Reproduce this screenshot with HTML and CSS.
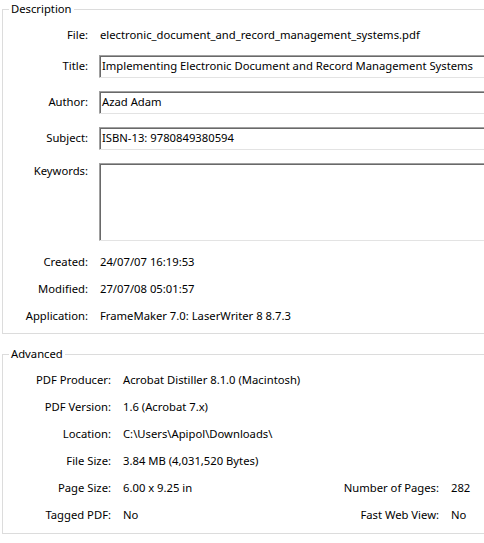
FILE: index.html
```html
<!DOCTYPE html>
<html lang="en">
<head>
<meta charset="utf-8">
<title>Document Properties</title>
<link rel="stylesheet" href="styles.css">
</head>
<body>
<div class="dialog">
  <fieldset class="group group-desc">
    <legend class="legend">Description</legend>
    <div class="rows">
      <div class="row">
        <div class="lbl">File:</div>
        <div class="val">electronic_document_and_record_management_systems.pdf</div>
      </div>
      <div class="row row-box">
        <div class="lbl lbl-box">Title:</div>
        <div class="box">Implementing Electronic Document and Record Management Systems</div>
      </div>
      <div class="row row-box">
        <div class="lbl lbl-box">Author:</div>
        <div class="box">Azad Adam</div>
      </div>
      <div class="row row-box">
        <div class="lbl lbl-box">Subject:</div>
        <div class="box">ISBN-13: 9780849380594</div>
      </div>
      <div class="row row-box">
        <div class="lbl">Keywords:</div>
        <div class="box box-tall"></div>
      </div>
      <div class="row row-after-box">
        <div class="lbl">Created:</div>
        <div class="val">24/07/07 16:19:53</div>
      </div>
      <div class="row row-text">
        <div class="lbl">Modified:</div>
        <div class="val">27/07/08 05:01:57</div>
      </div>
      <div class="row row-text">
        <div class="lbl">Application:</div>
        <div class="val">FrameMaker 7.0: LaserWriter 8 8.7.3</div>
      </div>
    </div>
  </fieldset>

  <fieldset class="group group-adv">
    <legend class="legend">Advanced</legend>
    <div class="adv">
      <div class="alb">PDF Producer:</div>
      <div class="aval span3">Acrobat Distiller 8.1.0 (Macintosh)</div>
      <div class="alb">PDF Version:</div>
      <div class="aval span3">1.6 (Acrobat 7.x)</div>
      <div class="alb">Location:</div>
      <div class="aval span3">C:\Users\Apipol\Downloads\</div>
      <div class="alb">File Size:</div>
      <div class="aval span3">3.84 MB (4,031,520 Bytes)</div>
      <div class="alb">Page Size:</div>
      <div class="aval">6.00 x 9.25 in</div>
      <div class="alb">Number of Pages:</div>
      <div class="aval">282</div>
      <div class="alb">Tagged PDF:</div>
      <div class="aval">No</div>
      <div class="alb">Fast Web View:</div>
      <div class="aval">No</div>
    </div>
  </fieldset>
</div>
</body>
</html>
```

FILE: styles.css
```css
html, body {
  margin: 0;
  padding: 0;
  background: #ffffff;
  overflow: hidden;
}

body {
  width: 484px;
  height: 543px;
  font-family: "Noto Sans", "Open Sans", "DejaVu Sans", sans-serif;
  font-size: 11.25px;
  line-height: 16px;
  color: #000000;
}

.dialog {
  width: 490px;
  padding: 1px 0 0 2px;
}

.group {
  margin: 0;
  padding: 0;
  width: 484px;
  border: 1px solid #dcdcdc;
  box-sizing: content-box;
  min-width: 0;
}

.legend {
  margin-left: 6px;
  padding: 0 2px;
  line-height: 16px;
}

.group-desc {
  padding: 10px 0 9px 0;
}

.group-adv {
  margin-top: 12px;
  padding: 10px 0 10px 0;
}

.rows {
  display: flex;
  flex-direction: column;
}

.row {
  display: flex;
  align-items: flex-start;
}

.row-box {
  margin-top: 12px;
}

.row-box + .row-box {
  margin-top: 13px;
}

.row-after-box {
  margin-top: 13px;
}

.row-text {
  margin-top: 11px;
}

.lbl {
  width: 85px;
  flex: none;
  text-align: right;
  margin-right: 11px;
}

.lbl-box {
  padding-top: 3px;
}

.val {
  padding-left: 1px;
  white-space: nowrap;
}

.box {
  flex: 1;
  height: 23px;
  box-sizing: border-box;
  padding: 2px 0 0 2px;
  background: #ffffff;
  border-top: 1px solid #a0a0a0;
  border-left: 1px solid #a0a0a0;
  border-right: 1px solid #e3e3e3;
  border-bottom: 1px solid #e3e3e3;
  box-shadow: inset 1px 1px 0 #696969;
  white-space: nowrap;
  overflow: hidden;
}

.box-tall {
  height: 78px;
}

.adv {
  display: grid;
  grid-template-columns: 108px 1fr auto 36px;
  column-gap: 12px;
  row-gap: 11px;
}

.alb {
  text-align: right;
  white-space: nowrap;
}

.aval {
  white-space: nowrap;
}

.span3 {
  grid-column: 2 / 5;
}
```
